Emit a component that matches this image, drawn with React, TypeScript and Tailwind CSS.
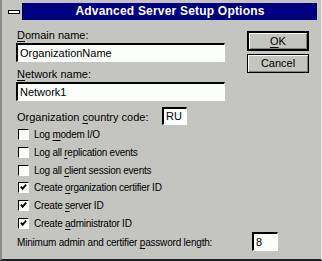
import React from "react";

function Mn({ children }: { children: React.ReactNode }) {
  return <span className="underline underline-offset-[2px]">{children}</span>;
}

function Field({ value, className }: { value: string; className: string }) {
  return (
    <div
      className={`border-t-2 border-l-2 border-t-[#000000] border-l-[#000000] border-b border-r border-b-[#ffffff] border-r-[#ffffff] bg-[#fcfefc] flex items-center pl-[2px] ${className}`}
    >
      {value}
    </div>
  );
}

function Check({ checked, children }: { checked?: boolean; children: React.ReactNode }) {
  return (
    <div className="h-[17.7px] flex items-center">
      <div className="w-[11px] h-[11px] ml-[2px] mr-[5px] bg-[#fcfefc] border border-t-[#000000] border-l-[#000000] border-b-[#ffffff] border-r-[#ffffff] flex items-center justify-center">
        {checked && (
          <svg width="7" height="7" viewBox="0 0 8 8">
            <path d="M1 3 L3 5.5 L7 0.8" stroke="#000" strokeWidth="2.2" fill="none" />
          </svg>
        )}
      </div>
      <span className="text-[10px] tracking-[-0.25px]">{children}</span>
    </div>
  );
}

export default function App() {
  return (
    <div className="w-[322px] h-[261px] bg-[#c4c5c1] border-l-2 border-l-[#8a8b88] border-b-2 border-b-[#202020] border-r border-r-[#e8e8e6] pl-[3px] pr-[4px] pt-[3px] text-[11px] leading-[13px] text-black font-['Liberation_Sans',Arial,sans-serif] overflow-hidden">
      {/* Title bar */}
      <div className="h-[17px] flex bg-[#000080]">
        <div className="w-[18px] h-[17px] bg-[#c4c5c1] border-r border-r-[#000000] flex items-center justify-center">
          <div className="w-[12px] h-[4px] bg-white border border-[#000000]" />
        </div>
        <div className="flex-1 flex items-center justify-center text-white font-bold text-[12px] tracking-[0.2px]">
          Advanced Server Setup Options
        </div>
      </div>

      {/* Body */}
      <div className="pl-[11px]">
        <div className="flex">
          <div className="w-[209px]">
            <div className="mt-[9px] h-[13px] pl-[1px]">
              <Mn>D</Mn>omain name:
            </div>
            <Field value="OrganizationName" className="mt-[1px] h-[19px]" />
            <div className="mt-[6px] h-[13px] pl-[1px]">
              <Mn>N</Mn>etwork name:
            </div>
            <Field value="Network1" className="mt-[1px] h-[19px]" />
          </div>
          <div className="ml-[22px] w-[62px]">
            <button className="mt-[11px] w-[62px] h-[20px] border-2 border-black bg-[#c4c5c1] flex items-center justify-center shadow-[inset_1px_1px_0_#ffffff,inset_-1px_-1px_0_#808080]">
              <Mn>O</Mn>K
            </button>
            <button className="mt-[3px] w-[62px] h-[19px] border border-black bg-[#c4c5c1] flex items-center justify-center shadow-[inset_1px_1px_0_#ffffff,inset_-1px_-1px_0_#808080]">
              Cancel
            </button>
          </div>
        </div>

        <div className="mt-[6px] flex items-center h-[18px]">
          <span className="w-[146px] pl-[1px] mt-[3px]">
            Organization <Mn>c</Mn>ountry code:
          </span>
          <Field value="RU" className="w-[25px] h-[18px]" />
        </div>

        <div className="mt-[1px] flex flex-col">
          <Check>
            Log <Mn>m</Mn>odem I/O
          </Check>
          <Check>
            Log all <Mn>r</Mn>eplication events
          </Check>
          <Check>
            Log all <Mn>c</Mn>lient session events
          </Check>
          <Check checked>
            Create <Mn>o</Mn>rganization certifier ID
          </Check>
          <Check checked>
            Create <Mn>s</Mn>erver ID
          </Check>
          <Check checked>
            Create <Mn>a</Mn>dministrator ID
          </Check>
        </div>

        <div className="flex items-center h-[19px]">
          <span className="w-[236px] pl-[1px] mt-[1px] text-[10px] tracking-[-0.2px]">
            Minimum admin and certifier <Mn>p</Mn>assword length:
          </span>
          <Field value="8" className="w-[26px] h-[19px]" />
        </div>
      </div>
    </div>
  );
}
